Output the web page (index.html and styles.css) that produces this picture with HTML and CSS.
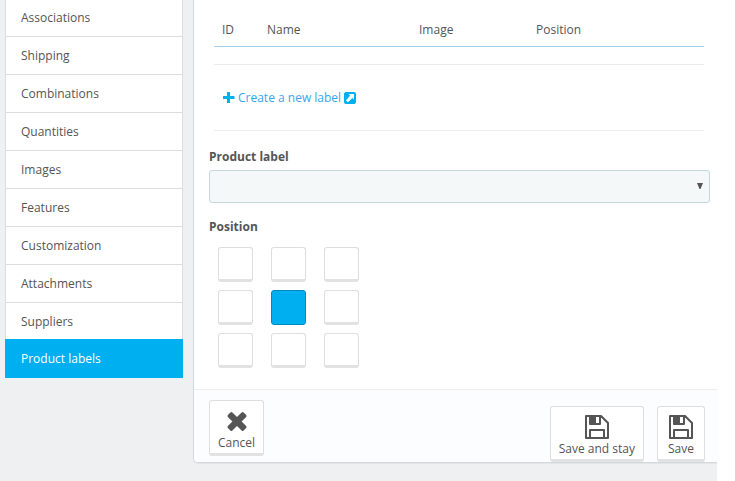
FILE: index.html
```html
<!DOCTYPE html>
<html lang="en">
<head>
<meta charset="utf-8">
<title>Product labels</title>
<link rel="stylesheet" href="styles.css">
</head>
<body>
<div class="workspace">
  <nav class="tabs">
    <a href="#">Associations</a>
    <a href="#">Shipping</a>
    <a href="#">Combinations</a>
    <a href="#">Quantities</a>
    <a href="#">Images</a>
    <a href="#">Features</a>
    <a href="#">Customization</a>
    <a href="#">Attachments</a>
    <a href="#">Suppliers</a>
    <a href="#" class="active">Product labels</a>
  </nav>
  <main class="panel">
    <div class="content">
      <section class="labels">
        <table>
          <thead>
            <tr><th class="col-id">ID</th><th class="col-name">Name</th><th class="col-image">Image</th><th>Position</th></tr>
          </thead>
        </table>
        <div class="create">
          <a href="#">
            <svg class="plus" viewBox="0 0 12 12" width="12" height="12"><path d="M4 .5Q4 0 4.500 0h2Q7 0 7 .5V4h4q.5 0 .5.5v2q0 .5-.5.5H7v3.500q0 .5-.5.5h-2q-.5 0-.5-.5V7H.5Q0 7 0 6.500v-2Q0 4 .5 4H4z"/></svg>
            <span>Create a new label</span>
            <svg class="external" viewBox="0 0 12 12" width="12" height="12"><rect width="12" height="12" rx="2"/><path class="arrow" d="M4.500 2H10v5.500L8.400 5.900 3.900 10.300 2 8.400 6.100 3.600z"/></svg>
          </a>
        </div>
      </section>
      <label class="field-label" for="product-label">Product label</label>
      <div class="select-wrap">
        <select id="product-label"><option></option></select>
        <svg viewBox="0 0 6 6" width="6" height="6"><path d="M0 0h6L3.500 6h-1z"/></svg>
      </div>
      <div class="field-label" id="position-label">Position</div>
      <div class="positions" role="group" aria-labelledby="position-label">
        <button type="button"></button><button type="button"></button><button type="button"></button>
        <button type="button"></button><button type="button" class="selected"></button><button type="button"></button>
        <button type="button"></button><button type="button"></button><button type="button"></button>
      </div>
    </div>
    <footer class="actions">
      <button type="button" class="action cancel">
        <svg viewBox="0 0 30 30" width="30" height="30"><path d="M10.400 6.500 15 11l4.600-4.500q1-1 2 0l2.500 2.500q1 1 0 2L19.600 15.500l4.500 4.500q1 1 0 2l-2.500 2.500q-1 1-2 0L15 20l-4.600 4.500q-1 1-2 0L5.900 22q-1-1 0-2l4.500-4.500L5.900 11q-1-1 0-2l2.500-2.500q1-1 2 0z"/></svg>
        <span>Cancel</span>
      </button>
      <button type="button" class="action save-stay">
        <svg viewBox="0 0 30 30" width="30" height="30"><path class="line" d="M4 4h15l7 7v15H4zM8 26v-8h14v8M8 4v8h10V4"/><path d="M8 4h6v8H8z"/></svg>
        <span>Save and stay</span>
      </button>
      <button type="button" class="action save">
        <svg viewBox="0 0 30 30" width="30" height="30"><path class="line" d="M4 4h15l7 7v15H4zM8 26v-8h14v8M8 4v8h10V4"/><path d="M8 4h6v8H8z"/></svg>
        <span>Save</span>
      </button>
    </footer>
  </main>
</div>
</body>
</html>
```
FILE: styles.css
```css
* { box-sizing: border-box; }

body {
  margin: 0;
  background: #fff;
  color: #555;
  font: 12px/18px "Open Sans", sans-serif;
}

a { text-decoration: none; }

button {
  padding: 0;
  border: 1px solid #dedede;
  border-bottom: 3px solid #e2e2e2;
  border-radius: 3px;
  background: #fff;
  color: #555;
  font: inherit;
}

.workspace {
  display: flex;
  align-items: flex-start;
  gap: 10px;
  min-height: 100vh;
  margin-right: 18px;
  padding-left: 5px;
  background: #eff0f2;
}

.tabs {
  display: flex;
  flex: 0 0 178px;
  flex-direction: column;
}

.tabs a {
  height: 38px;
  padding: 10px 15px 9px;
  border: 1px solid #dcdddf;
  border-top: 0;
  background: #fff;
  color: #555;
}

.tabs a:first-child {
  height: 37px;
  padding-top: 9px;
}

.tabs a.active {
  height: 39px;
  margin-top: -2px;
  padding-top: 11px;
  border-color: #00aff0;
  background: #00aff0;
  color: #fff;
  font-weight: 500;
}

.panel {
  flex: 1;
  border: solid #d3d8db;
  border-width: 0 0 1px 1px;
  border-bottom-left-radius: 5px;
  background: #fff;
  box-shadow: 0 1px 1px #e2e4e6;
}

.content { padding: 0 7px 21px 15px; }

.labels {
  margin-bottom: 17px;
  padding: 21px 6px 0 5px;
}

table {
  width: 100%;
  border-collapse: collapse;
  table-layout: fixed;
}

th {
  padding: 0 8px 7px;
  border-bottom: 1px solid #a0d0eb;
  font-weight: 400;
  text-align: left;
}

.col-id { width: 45px; }
.col-name { width: 152px; }
.col-image { width: 117px; }

.create {
  margin-top: 17px;
  padding: 24px 9px 23px;
  border: solid #eaedef;
  border-width: 1px 0;
}

.create a {
  display: flex;
  align-items: center;
  gap: 3px;
  color: #3aa5e8;
}

.create svg { fill: #00aff0; }
.create .arrow { fill: #fff; }

.field-label {
  display: block;
  font-weight: 700;
}

.select-wrap {
  position: relative;
  margin: 4px 0 15px;
}

select {
  display: block;
  width: 100%;
  height: 33px;
  border: 1px solid #c7d6db;
  border-radius: 3px;
  background: #f5f8f9;
  appearance: none;
}

.select-wrap svg {
  position: absolute;
  top: 13px;
  right: 7px;
  fill: #555;
  pointer-events: none;
}

.positions {
  display: grid;
  grid-template-columns: repeat(3, 35px);
  gap: 8px 18px;
  margin: 11px 9px 0;
}

.positions button { height: 35px; }

.positions .selected {
  border: 1px solid #008abd;
  background: #00aff0;
}

.actions {
  display: flex;
  align-items: flex-end;
  padding: 10px 12px 0 15px;
  border-top: 1px solid #eee;
  border-bottom-left-radius: 4px;
  background: #fcfdfe;
}

.action {
  display: flex;
  flex-direction: column;
  align-items: center;
  padding: 5px 8px 1px;
}

.action svg {
  margin-bottom: -2px;
  fill: #555;
}

.action .line {
  fill: none;
  stroke: #555;
  stroke-width: 2;
  stroke-linejoin: round;
}

.cancel {
  margin-bottom: 6px;
  margin-right: auto;
}

.save { margin-left: 13px; }
```
